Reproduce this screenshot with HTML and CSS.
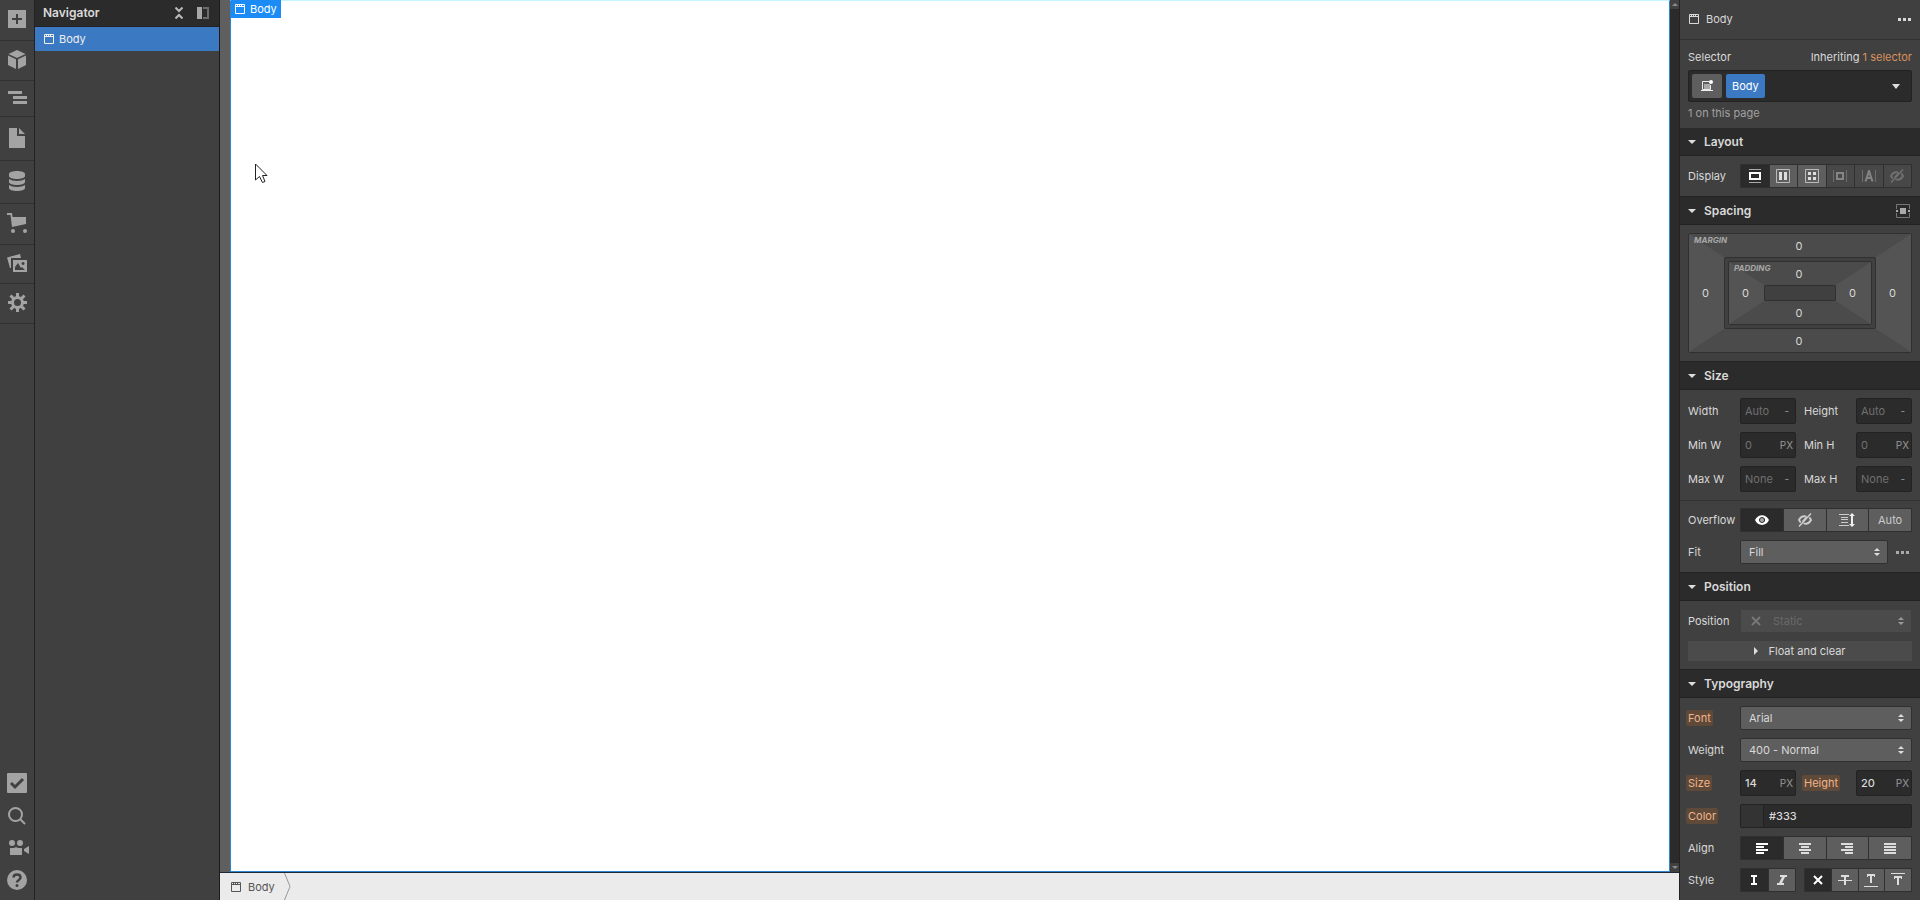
FILE: index.html
```html
<!DOCTYPE html>
<html lang="en">
<head>
    <meta charset="UTF-8">
    <title>Designer</title>
    <link rel="stylesheet" href="styles.css">
</head>
<body>
    <svg class="sprite" aria-hidden="true">
        <symbol id="i-body" viewBox="0 0 10 10">
            <path fill="none" stroke="currentColor" d="M.5 .5h9v9h-9z"/>
            <path fill="currentColor" d="M1 2h8v1H1zM2 1h1v1H2zM4 1h1v1H4zM6 1h1v1H6z"/>
        </symbol>
        <symbol id="i-dots" viewBox="0 0 13 3">
            <path fill="currentColor" d="M0 0h3v3H0zM5 0h3v3H5zM10 0h3v3h-3z"/>
        </symbol>
        <symbol id="i-hidden" viewBox="0 0 14 14">
            <path fill="none" stroke="currentColor" stroke-width="2" d="M8.500 3.600C4.500 2.600 2 5 1 7c.4 1 1 1.800 1.800 2.400M5.500 10.400C9.500 11.400 12 9 13 7c-.4-1-1-1.800-1.800-2.400"/>
            <path fill="none" stroke="currentColor" stroke-width="1.500" d="M1 13.500L13 .5M4.500 8.500L8.500 4.200"/>
        </symbol>
    </svg>

    <nav class="rail">
        <button class="rail-btn h41" title="Add"><svg width="18" height="18"><path fill="#a3a3a3" fill-rule="evenodd" d="M0 0h18v18H0zM8 4v4H4v2h4v4h2v-4h4V8h-4V4z"/></svg></button>
        <button class="rail-btn h40" title="Symbols"><svg width="18" height="19"><path fill="#a3a3a3" d="M9 0l8.500 4L9 8 .5 4zM0 5.500l8 3.800V19l-8-4zM18 5.500l-8 3.800V19l8-4z"/></svg></button>
        <button class="rail-btn h36" title="Navigator"><svg width="19" height="13"><path fill="#a3a3a3" d="M0 0h14v3H0zM5 5h14v3H5zM5 10h14v3H5z"/></svg></button>
        <button class="rail-btn h44" title="Pages"><svg width="16" height="20"><path fill="#a3a3a3" d="M0 0h8v8h8v12H0zM10 0l6 6h-6z"/></svg></button>
        <button class="rail-btn h43" title="CMS"><svg width="16" height="20"><path fill="#a3a3a3" d="M0 3C0-1 16-1 16 3v2c0 4-16 4-16 0zM0 8c3 2.500 13 2.500 16 0v3c0 4-16 4-16 0zM0 14c3 2.500 13 2.500 16 0v3c0 4-16 4-16 0z"/></svg></button>
        <button class="rail-btn h41" title="Ecommerce"><svg width="20" height="20"><path fill="#a3a3a3" d="M0 0h5l.6 4H19v7L5 14 3.500 2H0z"/><circle cx="6" cy="18" r="2" fill="#a3a3a3"/><circle cx="18" cy="18" r="2" fill="#a3a3a3"/></svg></button>
        <button class="rail-btn h39" title="Assets"><svg width="20" height="18"><path fill="#a3a3a3" fill-rule="evenodd" d="M0 3.500L13 0l1 4H4v10H3zM6 6h14v12H6zM8 16h10l-3-3-1 1-3-5-3 4zM16 8a1.500 1.500 0 1 0 .1 0z"/></svg></button>
        <button class="rail-btn h40" title="Settings"><svg width="19" height="19" viewBox="-9.500 -9.500 19 19"><circle r="5" fill="none" stroke="#a3a3a3" stroke-width="3"/><path stroke="#a3a3a3" stroke-width="3" d="M0-5.500v-4M0 5.500v4M-5.500 0h-4M5.500 0h4M-4-4l-3-3M4 4l3 3M-4 4l-3 3M4-4l3-3"/></svg></button>
        <div class="rail-bottom">
            <button title="Audit"><svg width="20" height="20"><rect width="20" height="20" rx="1" fill="#a3a3a3"/><path fill="none" stroke="#404040" stroke-width="3" d="M4 10l4 4 8-8"/></svg></button>
            <button title="Search"><svg width="20" height="20"><circle cx="8.500" cy="8.500" r="6.500" fill="none" stroke="#a3a3a3" stroke-width="2"/><path stroke="#a3a3a3" stroke-width="2" d="M13 13l5 5"/></svg></button>
            <button class="video" title="Video tutorials"><svg width="20" height="16"><circle cx="3" cy="3" r="3" fill="#a3a3a3"/><circle cx="11" cy="3" r="3" fill="#a3a3a3"/><path fill="#a3a3a3" d="M1 8h4l2-1 2 1h4v7H1zM15 9l5-3v8l-5-3z"/></svg></button>
            <button title="Help"><svg width="20" height="20"><circle cx="10" cy="10" r="10" fill="#a3a3a3"/><path fill="none" stroke="#404040" stroke-width="2.500" d="M6.500 7.500C6.500 3.500 13.500 3.500 13.500 7.500c0 2.500-3.500 2.500-3.500 5"/><circle cx="10" cy="15.500" r="1.500" fill="#404040"/></svg></button>
        </div>
    </nav>

    <aside class="navigator">
        <header class="nav-head">
            <h2>Navigator</h2>
            <button title="Collapse all"><svg width="8" height="12"><path fill="none" stroke="#bbb" stroke-width="2" d="M.5 .5L4 4 7.500 .5M.5 11.500L4 8l3.500 3.500"/></svg></button>
            <button title="Pin"><svg width="12" height="12"><path fill="#a8a8a8" d="M0 0h5v12H0z"/><path fill="none" stroke="#6b6b6b" stroke-width="2" d="M6 1h5v10H6"/></svg></button>
        </header>
        <a class="nav-item" href="#"><svg width="10" height="10"><use href="#i-body"/></svg>Body</a>
    </aside>

    <main class="stage">
        <div class="stage-row">
            <div class="canvas">
                <span class="canvas-tag"><svg width="10" height="10"><use href="#i-body"/></svg>Body</span>
                <svg class="cursor" width="14" height="21"><path fill="#fff" stroke="#222" d="M.5 1v16l4-3.500 3 6 2.500-1-2.500-6H12z"/></svg>
            </div>
            <div class="scrollbar">
                <span><svg width="6" height="3"><path fill="#8a8a8a" d="M3 0l3 3H0z"/></svg></span>
                <span><svg width="6" height="3"><path fill="#8a8a8a" d="M0 0h6L3 3z"/></svg></span>
            </div>
        </div>
        <footer class="crumbs">
            <a href="#"><svg width="10" height="10"><use href="#i-body"/></svg>Body</a>
            <svg width="7" height="27"><path fill="none" stroke="#999" d="M.5 0l5.500 13.500L.5 27"/></svg>
        </footer>
    </main>

    <aside class="panel">
        <header class="panel-head">
            <svg width="10" height="10"><use href="#i-body"/></svg>
            <span>Body</span>
            <button title="More"><svg width="13" height="3"><use href="#i-dots"/></svg></button>
        </header>

        <section class="selector">
            <div class="selector-top"><span>Selector</span><span>Inheriting <a href="#">1 selector</a></span></div>
            <div class="selector-box">
                <button class="states" title="States"><svg width="12" height="12"><path fill="#aaa" d="M3 4h6v5H3z"/><path fill="none" stroke="#eee" d="M8 1.500H1.500v8h8V5M0 10.500h12"/><circle cx="10" cy="2" r="2" fill="#fff"/></svg></button>
                <button class="chip">Body</button>
                <svg class="caret" width="8" height="5"><path fill="#ddd" d="M0 0h8L4 5z"/></svg>
            </div>
            <p>1 on this page</p>
        </section>

        <h3 class="no-top"><svg width="8" height="4"><path fill="#ddd" d="M0 0h8L4 4z"/></svg>Layout</h3>
        <section class="group">
            <div class="row">
                <span class="label">Display</span>
                <div class="segmented">
                    <button class="on" title="Block"><svg width="14" height="14"><path fill="#aaa" d="M1 0h12v1H1zM1 13h12v1H1z"/><path fill="none" stroke="#fff" stroke-width="2" d="M2 4h10v6H2z"/></svg></button>
                    <button title="Flex"><svg width="14" height="14"><path fill="none" stroke="#bbb" d="M.5 .5h13v13H.5z"/><path fill="#ddd" d="M3 3h3v8H3zM8 3h3v8H8z"/></svg></button>
                    <button title="Grid"><svg width="14" height="14"><path fill="none" stroke="#bbb" d="M.5 .5h13v13H.5z"/><path fill="#ddd" d="M3 3h3v3H3zM8 3h3v3H8zM3 8h3v3H3zM8 8h3v3H8z"/></svg></button>
                    <button title="Inline-block" disabled><svg width="14" height="12"><path fill="#6c6c6c" d="M0 0h1v12H0zM13 0h1v12h-1z"/><path fill="none" stroke="#858585" stroke-width="2" d="M4 3h6v6H4z"/></svg></button>
                    <button title="Inline" disabled><svg width="14" height="12"><path fill="#6c6c6c" d="M0 0h1v12H0zM13 0h1v12h-1z"/><path fill="none" stroke="#858585" stroke-width="2" d="M3.500 11.500L7 1l3.500 10.500M5 8h4"/></svg></button>
                    <button title="None" disabled><svg width="14" height="14"><use href="#i-hidden"/></svg></button>
                </div>
            </div>
        </section>

        <h3><svg width="8" height="4"><path fill="#ddd" d="M0 0h8L4 4z"/></svg>Spacing
            <button title="Center element"><svg width="14" height="14"><path fill="none" stroke="#777" d="M.5 5V.5h13V5M.5 9v4.500h13V9"/><path fill="#aaa" d="M4 4h6v6H4zM0 6h2v2H0zM12 6h2v2h-2z"/></svg></button>
        </h3>
        <section class="group">
            <div class="margin-box">
                <em>MARGIN</em>
                <button class="top">0</button>
                <button class="left">0</button>
                <div class="padding-frame">
                    <div class="padding-box">
                        <em>PADDING</em>
                        <button class="top">0</button>
                        <button class="left">0</button>
                        <div class="content-box"></div>
                        <button class="right">0</button>
                        <button class="bottom">0</button>
                    </div>
                </div>
                <button class="right">0</button>
                <button class="bottom">0</button>
            </div>
        </section>

        <h3><svg width="8" height="4"><path fill="#ddd" d="M0 0h8L4 4z"/></svg>Size</h3>
        <section class="group">
            <div class="row pair">
                <label for="width">Width</label>
                <div class="field"><input id="width" placeholder="Auto"><span class="dash">-</span></div>
                <label for="height">Height</label>
                <div class="field"><input id="height" placeholder="Auto"><span class="dash">-</span></div>
            </div>
            <div class="row pair">
                <label for="minw">Min W</label>
                <div class="field"><input id="minw" placeholder="0"><span>PX</span></div>
                <label for="minh">Min H</label>
                <div class="field"><input id="minh" placeholder="0"><span>PX</span></div>
            </div>
            <div class="row pair">
                <label for="maxw">Max W</label>
                <div class="field"><input id="maxw" placeholder="None"><span class="dash">-</span></div>
                <label for="maxh">Max H</label>
                <div class="field"><input id="maxh" placeholder="None"><span class="dash">-</span></div>
            </div>
        </section>
        <section class="group overflow">
            <div class="row">
                <span class="label">Overflow</span>
                <div class="segmented">
                    <button class="on" title="Visible"><svg width="14" height="10"><path fill="#fff" fill-rule="evenodd" d="M0 5C3-1.500 11-1.500 14 5 11 11.500 3 11.500 0 5zM7 2a3 3 0 1 0 .1 0z"/><circle cx="7" cy="5" r="2" fill="#aaa"/></svg></button>
                    <button title="Hidden"><svg width="14" height="14"><use href="#i-hidden"/></svg></button>
                    <button title="Scroll"><svg width="16" height="14"><path fill="#ccc" d="M0 1h10v1H0zM2 4h7v1H2zM2 6h7v1H2zM2 9h7v1H2zM0 12h10v1H0z"/><path fill="#eee" d="M13 0l3 3h-2v8h2l-3 3-3-3h2V3h-2z"/></svg></button>
                    <button>Auto</button>
                </div>
            </div>
            <div class="row">
                <label for="fit">Fit</label>
                <div class="select"><select id="fit"><option>Fill</option></select><svg width="6" height="8"><path fill="#ddd" d="M3 0l3 3H0zM0 5h6L3 8z"/></svg></div>
                <button class="more" title="More"><svg width="13" height="3"><use href="#i-dots"/></svg></button>
            </div>
        </section>

        <h3><svg width="8" height="4"><path fill="#ddd" d="M0 0h8L4 4z"/></svg>Position</h3>
        <section class="group">
            <div class="row">
                <label for="position">Position</label>
                <div class="select off"><svg class="x" width="10" height="10"><path stroke="#777" stroke-width="2" d="M1 1l8 8M9 1L1 9"/></svg><select id="position" disabled><option>Static</option></select><svg width="6" height="8"><path fill="#999" d="M3 0l3 3H0zM0 5h6L3 8z"/></svg></div>
            </div>
            <button class="float"><svg width="4" height="8"><path fill="#ddd" d="M0 0l4 4-4 4z"/></svg>Float and clear</button>
        </section>

        <h3><svg width="8" height="4"><path fill="#ddd" d="M0 0h8L4 4z"/></svg>Typography</h3>
        <section class="group">
            <div class="row">
                <label for="font"><mark>Font</mark></label>
                <div class="select"><select id="font"><option>Arial</option></select><svg width="6" height="8"><path fill="#ddd" d="M3 0l3 3H0zM0 5h6L3 8z"/></svg></div>
            </div>
            <div class="row">
                <label for="weight">Weight</label>
                <div class="select"><select id="weight"><option>400 - Normal</option></select><svg width="6" height="8"><path fill="#ddd" d="M3 0l3 3H0zM0 5h6L3 8z"/></svg></div>
            </div>
            <div class="row pair">
                <label for="size"><mark>Size</mark></label>
                <div class="field"><input id="size" value="14"><span>PX</span></div>
                <label for="line"><mark>Height</mark></label>
                <div class="field"><input id="line" value="20"><span>PX</span></div>
            </div>
            <div class="row">
                <label for="color"><mark>Color</mark></label>
                <div class="field color"><i class="swatch"></i><input id="color" value="#333"></div>
            </div>
            <div class="row">
                <span class="label">Align</span>
                <div class="segmented">
                    <button class="on" title="Left"><svg width="12" height="11"><path fill="#fff" d="M0 0h12v2H0zM0 3h8v2H0zM0 6h12v2H0zM0 9h8v2H0z"/></svg></button>
                    <button title="Center"><svg width="12" height="11"><path fill="#ddd" d="M0 0h12v2H0zM2 3h8v2H2zM0 6h12v2H0zM2 9h8v2H2z"/></svg></button>
                    <button title="Right"><svg width="12" height="11"><path fill="#ddd" d="M0 0h12v2H0zM4 3h8v2H4zM0 6h12v2H0zM4 9h8v2H4z"/></svg></button>
                    <button title="Justify"><svg width="12" height="11"><path fill="#ddd" d="M0 0h12v2H0zM0 3h12v2H0zM0 6h12v2H0zM0 9h12v2H0z"/></svg></button>
                </div>
            </div>
            <div class="row">
                <span class="label">Style</span>
                <div class="segmented italics">
                    <button class="on" title="Regular"><svg width="6" height="10"><path fill="#fff" d="M0 0h6v2H4v6h2v2H0V8h2V2H0z"/></svg></button>
                    <button title="Italic"><svg width="10" height="10"><path fill="#ddd" d="M3 0h7v2H8L5 8h2v2H0V8h2l3-6H3z"/></svg></button>
                </div>
                <div class="segmented">
                    <button class="on" title="None"><svg width="10" height="10"><path stroke="#fff" stroke-width="2" d="M1 1l8 8M9 1L1 9"/></svg></button>
                    <button title="Strikethrough"><svg width="14" height="12"><path fill="#ddd" d="M3 1h8v2H8v3h6v1H8v4H6V7H0V6h6V3H3z"/></svg></button>
                    <button title="Underline"><svg width="14" height="14"><path fill="#ddd" d="M3 1h8v3h-1V3H8v7H6V3H4v1H3zM0 13h14v1H0z"/></svg></button>
                    <button title="Overline"><svg width="14" height="14"><path fill="#ddd" d="M0 0h14v1H0zM3 3h8v3h-1V5H8v7H6V5H4v1H3z"/></svg></button>
                </div>
            </div>
        </section>
    </aside>
</body>
</html>
```
FILE: styles.css
```css
* {
    box-sizing: border-box;
}
body {
    margin: 0;
    display: flex;
    height: 100vh;
    overflow: hidden;
    background: #404040;
    color: #d9d9d9;
    font: 11px/16px Inter, sans-serif;
}
svg {
    display: block;
    flex: none;
}
.sprite {
    display: none;
}
button, input, select {
    font: inherit;
    color: inherit;
    margin: 0;
    padding: 0;
    border: 0;
    background: none;
}
a {
    color: inherit;
    text-decoration: none;
}

/* left rail */
.rail {
    display: flex;
    flex-direction: column;
    width: 35px;
    border-right: 1px solid #222;
}
.rail-btn {
    display: flex;
    align-items: center;
    justify-content: center;
    padding-bottom: 2px;
    border-bottom: 1px solid #303030;
}
.h36 { height: 36px; }
.h39 { height: 39px; }
.h40 { height: 40px; }
.h41 { height: 41px; }
.h43 { height: 43px; }
.h44 { height: 44px; }
.rail-bottom {
    display: flex;
    flex-direction: column;
    align-items: flex-start;
    gap: 13px;
    margin-top: auto;
    padding: 0 0 10px 7px;
}
.rail-bottom .video {
    padding: 1px 0 1px 2px;
}

/* navigator */
.navigator {
    width: 185px;
    border-right: 1px solid #1c1c1c;
}
.nav-head {
    display: flex;
    align-items: center;
    gap: 14px;
    height: 27px;
    padding: 0 10px 0 8px;
    background: #2b2b2b;
    border-bottom: 1px solid #222;
}
.nav-head h2 {
    flex: 1;
    margin: 0;
    font-size: 12px;
    font-weight: 600;
}
.nav-item {
    display: flex;
    align-items: center;
    gap: 5px;
    height: 24px;
    padding-left: 9px;
    background: #3b79c3;
    color: #eee;
}

/* canvas */
.stage {
    flex: 1;
    display: flex;
    flex-direction: column;
}
.stage-row {
    flex: 1;
    display: flex;
    padding-left: 10px;
    background: #5f5f5f;
    border-bottom: 1px solid #1c2a38;
}
.canvas {
    position: relative;
    flex: 1;
    background: #fff;
    border: 1px solid #2f86d0;
    border-top-color: #c8f4ff;
}
.canvas-tag {
    position: absolute;
    top: -1px;
    left: 0;
    display: flex;
    align-items: center;
    gap: 5px;
    height: 18px;
    padding: 0 4px;
    background: #1b8cf5;
    color: #fff;
}
.cursor {
    position: absolute;
    top: 162px;
    left: 24px;
}
.scrollbar {
    display: flex;
    flex-direction: column;
    justify-content: space-between;
    width: 9px;
    background: #2b2b2b;
}
.scrollbar span {
    display: flex;
    align-items: center;
    justify-content: center;
    height: 9px;
    background: #404040;
}
.crumbs {
    display: flex;
    align-items: center;
    gap: 9px;
    height: 27px;
    background: #ebebeb;
    color: #555;
}
.crumbs a {
    display: flex;
    align-items: center;
    gap: 7px;
    padding-left: 11px;
}

/* style panel */
.panel {
    width: 241px;
    border-left: 1px solid #222;
    overflow: hidden;
}
.panel-head {
    display: flex;
    align-items: center;
    gap: 7px;
    height: 40px;
    padding: 0 9px 1px;
    border-bottom: 1px solid #303030;
}
.panel-head button {
    margin-left: auto;
}
.selector {
    height: 88px;
    padding: 9px 8px 0;
}
.selector-top {
    display: flex;
    justify-content: space-between;
}
.selector-top a {
    color: #d9905c;
}
.selector-box {
    display: flex;
    align-items: center;
    gap: 4px;
    height: 32px;
    margin: 5px 0 3px;
    padding: 0 11px 0 3px;
    background: #2b2b2b;
    border: 1px solid #222;
    border-radius: 2px;
}
.selector-box button {
    height: 24px;
    border-radius: 2px;
}
.states {
    display: flex;
    align-items: center;
    justify-content: center;
    width: 30px;
    background: #5e5e5e;
}
.selector-box .chip {
    padding: 0 6px;
    background: #3b79c3;
    color: #fff;
}
.caret {
    margin-left: auto;
}
.selector p {
    margin: 0;
    color: #a0a0a0;
}
h3 {
    display: flex;
    align-items: center;
    gap: 8px;
    height: 29px;
    margin: 0;
    padding: 0 10px 0 8px;
    background: #2b2b2b;
    border: solid #222;
    border-width: 1px 0;
    font-size: 12px;
    font-weight: 600;
}
h3.no-top {
    height: 28px;
    border-top: 0;
}
h3 button {
    margin-left: auto;
}
.group {
    display: flex;
    flex-direction: column;
    gap: 8px;
    padding: 8px;
}
.overflow {
    border-top: 1px solid #333;
    padding-top: 7px;
}
.row {
    display: flex;
    align-items: center;
}
.label, label {
    flex: none;
    width: 52px;
}
.pair label:nth-of-type(2) {
    margin-left: 8px;
}
.segmented {
    flex: 1;
    display: flex;
    gap: 1px;
    height: 24px;
    padding: 1px;
    background: #303030;
}
.segmented button {
    flex: 1;
    display: flex;
    align-items: center;
    justify-content: center;
    background: #5e5e5e;
    color: #ccc;
}
.segmented button.on {
    background: #2b2b2b;
}
.segmented button:disabled {
    background: #484848;
    color: #707070;
}
.field {
    flex: 1;
    display: flex;
    align-items: center;
    min-width: 0;
    height: 26px;
    padding: 0 2px 0 4px;
    background: #2b2b2b;
    border: 1px solid #222;
    border-radius: 2px;
}
.field input {
    flex: 1;
    width: 20px;
    min-width: 0;
    outline: 0;
    font-weight: 500;
}
.field input::placeholder {
    color: #707070;
    font-weight: 400;
    opacity: 1;
}
.field span {
    color: #999;
    font-size: 10px;
}
.field .dash {
    padding-right: 4px;
}
.select {
    flex: 1;
    display: flex;
    align-items: center;
    height: 24px;
    padding: 0 7px 0 8px;
    background: #5e5e5e;
    border: 1px solid #303030;
    border-radius: 2px;
}
.select select {
    flex: 1;
    appearance: none;
}
.select.off {
    padding-left: 10px;
    background: #4b4b4b;
    border-color: #404040;
}
.off select {
    color: #6a6a6a;
    opacity: 1;
}
.off .x {
    margin-right: 12px;
}
.more {
    padding: 0 3px 0 8px;
    color: #aaa;
}
.float {
    display: flex;
    align-items: center;
    justify-content: center;
    gap: 10px;
    height: 20px;
    background: #4b4b4b;
}
mark {
    margin-left: -2px;
    padding: 1px 2px;
    background: #5f4938;
    border-radius: 2px;
    color: #f0b48c;
}
.color {
    height: 24px;
    padding-left: 0;
}
.swatch {
    align-self: stretch;
    width: 23px;
    margin-right: 5px;
    background: #333;
    border-right: 1px solid #222;
}
.italics {
    flex: none;
    width: 56px;
    margin-right: 8px;
}

/* margin / padding editor */
.margin-box, .padding-box {
    position: relative;
    isolation: isolate;
    display: grid;
    align-items: center;
    justify-items: center;
    border: 1px solid #303030;
    border-radius: 2px;
    background: #4b4b4b;
}
.margin-box {
    grid-template: 23px 72px 23px / 35px 1fr 35px;
}
.margin-box::before, .margin-box::after,
.padding-box::before, .padding-box::after {
    content: "";
    position: absolute;
    z-index: -1;
    top: 0;
    bottom: 0;
    left: 0;
    width: 35px;
    background: #545454;
    clip-path: polygon(0 0, 100% 23px, 100% calc(100% - 23px), 0 100%);
}
.margin-box::after, .padding-box::after {
    left: auto;
    right: 0;
    clip-path: polygon(100% 0, 0 23px, 0 calc(100% - 23px), 100% 100%);
}
.padding-frame {
    width: 100%;
    padding: 3px;
    border: 1px solid #303030;
    background: #404040;
    border-radius: 2px;
}
.padding-box {
    grid-template: 23px 16px 23px / 35px 1fr 35px;
}
.content-box {
    width: 100%;
    height: 16px;
    background: #404040;
    border: 1px solid #303030;
    border-radius: 2px;
}
.margin-box em {
    position: absolute;
    top: 0;
    left: 5px;
    font-size: 8px;
    line-height: 12px;
    font-weight: 700;
    color: #a8a8a8;
}
.top, .bottom {
    grid-column: 1 / -1;
}
.margin-box button {
    padding-right: 2px;
}
```
